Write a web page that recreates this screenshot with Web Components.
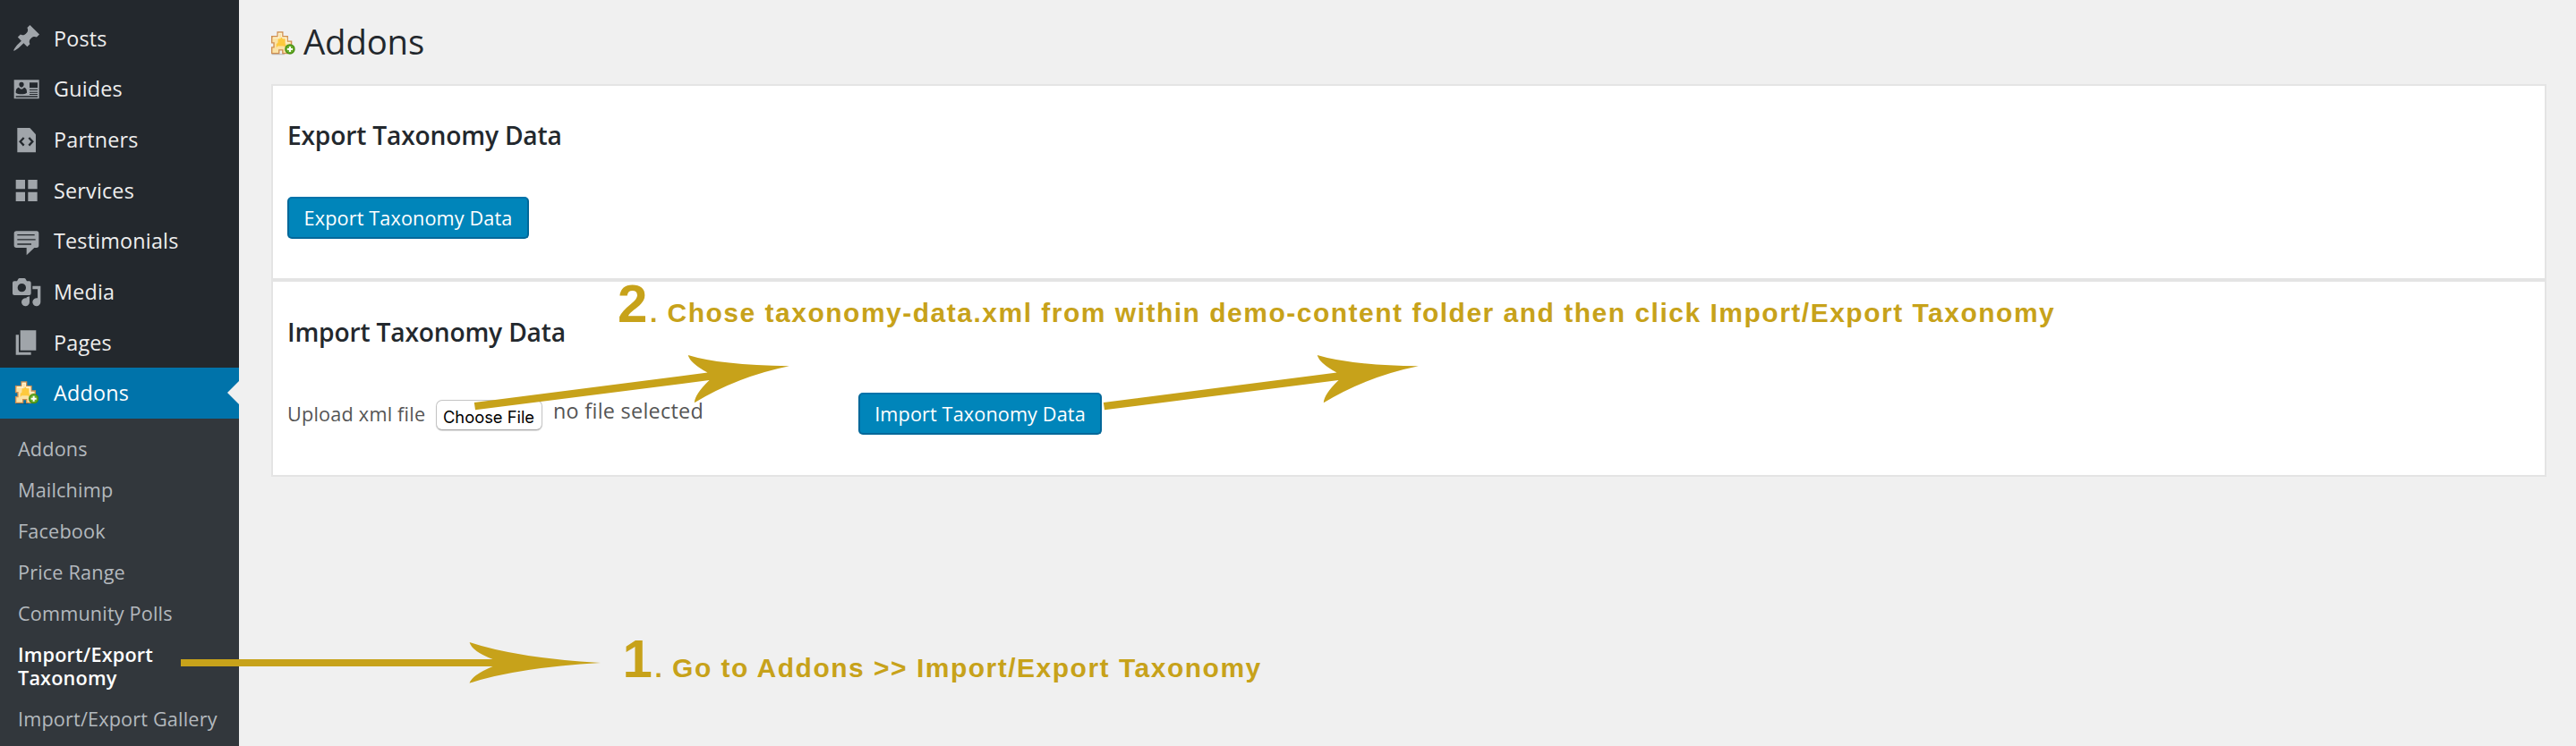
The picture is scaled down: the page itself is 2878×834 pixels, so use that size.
<!DOCTYPE html>
<html lang="en">
<head>
<meta charset="utf-8">
<title>Addons</title>
<style>
html,body{margin:0;height:100%;overflow:hidden;background:#f0f0f0}
body{font-family:"Open Sans",sans-serif;font-size:21.667px}
</style>
</head>
<body>
<addons-app></addons-app>
<script>
const puzzle = `<svg viewBox="0 0 80 80"><path d="M2 17H21V3H38V17H54V33H67V52H60V60H54V73H38V62H26V73H2V53H9V38H2Z" fill="#fbe2a6" stroke="#d08f50" stroke-width="4"/><path d="M6 21H25V7H34V21H50V38H62" fill="none" stroke="#fff3cf" stroke-width="4"/><path d="M23 25H30L34 19L38 25H46V40L50 52L40 49H22L17 54V42L22 38Z" fill="#fdc93e"/><path d="M2 76H44" stroke="#000" stroke-opacity=".18" stroke-width="4"/><circle cx="62" cy="59" r="17" fill="#478f12"/><circle cx="62" cy="59" r="13" fill="#69ac2b"/><path d="M62 50V68M53 59H71" stroke="#fff" stroke-width="6"/></svg>`;
const icons = {
 posts:`<svg viewBox="0 0 20 20"><path d="M10.44 3.02l1.82-1.82 6.36 6.35-1.83 1.82c-1.05-.68-2.48-.57-3.41.36l-.75.75c-.92.93-1.04 2.35-.35 3.41l-1.83 1.82-2.41-2.41-2.8 2.79c-.42.42-3.38 2.71-3.8 2.29s1.86-3.39 2.28-3.81l2.79-2.79L4.1 9.36l1.83-1.82c1.05.69 2.48.57 3.4-.36l.75-.75c.93-.92 1.05-2.35.36-3.41z"/></svg>`,
 guides:`<svg viewBox="0 0 100 100"><path fill-rule="evenodd" d="M8 19H92V82H8ZM60 28V46H87V28ZM60 51V54H87V51ZM60 59V62H87V59ZM60 66V69H87V66ZM14 73V77H87V73ZM33 26C27 26 25 30 25 34C25 39 28 44 33 44C38 44 41 39 41 34C41 30 39 26 33 26ZM24 44C17 46 14 50 14 62C18 66 25 67 33 67C41 67 47 66 51 62C51 50 48 46 42 44C39 48 36 50 33 50C30 50 27 48 24 44Z"/></svg>`,
 partners:`<svg viewBox="0 0 100 100"><path d="M19 12H61L81 34V94H19Z"/><path d="M41 45L29 58L41 71M58 45L70 58L58 71" fill="none" stroke="#23282d" stroke-width="7"/></svg>`,
 services:`<svg viewBox="0 0 100 100"><path d="M14 15H45V46H14ZM55 15H86V46H55ZM14 56H45V87H14ZM55 56H86V87H55Z"/></svg>`,
 testimonials:`<svg viewBox="0 0 100 100"><path d="M16 16H84Q91 16 91 24V64Q91 72 84 72H76L50 97V72H16Q8 72 8 64V24Q8 16 16 16Z"/><path d="M19 29H77M19 44.500H80M19 60H66" stroke="#23282d" stroke-width="4"/></svg>`,
 media:`<svg viewBox="0 0 100 100"><path fill-rule="evenodd" d="M9 16H18L22 9Q23 6 27 6H42Q46 6 47 9L51 16H59Q65 16 65 22V57Q65 63 59 63H9Q3 63 3 57V22Q3 16 9 16ZM34 24A14 14 0 1 0 34 52A14 14 0 1 0 34 24Z"/><path d="M70 32H97V86A13.500 13.500 0 1 1 87 73V43H70ZM60 67V86A13.500 13.500 0 1 1 50 73V70Z"/></svg>`,
 pages:`<svg viewBox="0 0 100 100"><path d="M29 10H82V77H29ZM14 25H24V83H65V92H14Z"/></svg>`,
 addons:puzzle
};
const define = (name, html) => customElements.define(name, class extends HTMLElement {
  constructor(){ super(); this.attachShadow({mode:'open'}).innerHTML = html(this); }
});

define('menu-item', el => `<style>
:host{display:flex;align-items:center;height:56.667px;color:#eee;font-size:23.333px;line-height:30px;letter-spacing:.2px;position:relative}
.icon{width:60px;display:flex;justify-content:center;fill:#a0a5aa}
.icon svg{display:block;width:33.333px;height:33.333px}
:host([current]){background:#0073aa;color:#fff}
:host([current]) .icon svg{width:26.667px;height:26.667px}
:host([current])::after{content:"";position:absolute;right:0;top:50%;margin-top:-13.333px;border:13.333px solid transparent;border-left:0;border-right-color:#f0f0f0}
</style><span class="icon">${icons[el.getAttribute('icon')]}</span><slot></slot>`);

define('sub-item', () => `<style>
:host{display:block;padding:10px 20px;font-size:21.667px;line-height:26px;letter-spacing:.16px;color:#b4b9be;white-space:nowrap}
:host([current]){color:#fff;font-weight:600}
</style><slot></slot>`);

define('side-menu', () => `<style>
:host{display:block;width:267px;flex:none;height:834px;box-sizing:border-box;padding-top:14.333px;background:#23282d;overflow:hidden}
.sub{background:#32373c;padding:11.667px 0 60px}
</style>
<menu-item icon="posts">Posts</menu-item><menu-item icon="guides">Guides</menu-item><menu-item icon="partners">Partners</menu-item><menu-item icon="services">Services</menu-item><menu-item icon="testimonials">Testimonials</menu-item><menu-item icon="media">Media</menu-item><menu-item icon="pages">Pages</menu-item><menu-item icon="addons" current>Addons</menu-item>
<div class="sub"><sub-item>Addons</sub-item><sub-item>Mailchimp</sub-item><sub-item>Facebook</sub-item><sub-item>Price Range</sub-item><sub-item>Community Polls</sub-item><sub-item current>Import/Export<br>Taxonomy</sub-item><sub-item>Import/Export Gallery</sub-item></div>`);

define('primary-button', () => `<style>
:host{display:block}
button{display:block;box-sizing:border-box;width:100%;height:47px;margin:0;padding:0;border:2px solid #006799;border-color:#0073aa #006799 #006799;border-radius:5px;background:#0085ba;color:#fff;font:21.667px/41px "Open Sans",sans-serif;letter-spacing:.12px;white-space:nowrap}
</style><button><slot></slot></button>`);

define('data-panel', () => `<style>
:host{display:block;box-sizing:border-box;background:#fff;border:2px solid #e4e4e4;padding:0 16px}
h3{margin:0;font-size:28.167px;line-height:40px;font-weight:600;letter-spacing:-.18px;color:#23282d}
</style><h3><slot name="title"></slot></h3><slot></slot>`);

define('file-picker', () => `<style>
:host{display:flex;color:#555;line-height:30px;white-space:nowrap}
.label{width:165.500px;padding-top:9px;letter-spacing:.2px}
button{box-sizing:border-box;width:119px;height:34px;margin:8px 0 0;padding:3px 0 0;border:1px solid #c4c4c4;border-bottom-color:#aaa;border-radius:7px;background:#fff;box-shadow:0 1px 1px #ddd;font:18.333px/22px Inter,sans-serif;color:#000}
.state{margin-left:12.500px;padding-top:5px;font-size:23.333px;letter-spacing:.3px}
</style><span class="label">Upload xml file</span><button>Choose File</button><span class="state">no file selected</span>`);

define('step-note', () => `<style>
:host{display:block;position:absolute;white-space:nowrap;color:#c7a21a;font:bold 30px/70px "Liberation Sans",Arial,sans-serif;letter-spacing:1.5px}
.n{font-size:60px;letter-spacing:2.500px}
</style><span class="n"><slot name="n"></slot></span><slot></slot>`);

define('note-arrows', () => `<style>
:host{display:block;position:absolute;inset:0;pointer-events:none}
svg{display:block}
</style><svg width="2878" height="834" fill="#c7a21a"><defs><path id="up" d="M529.800 450L790.500 416.600Q771 406 768.700 397Q804 408 881.800 409.300Q824 421 775.800 450.300Q776 441 792.500 425L531 458.300Z"/></defs><use href="#up"/><use href="#up" x="703"/><path d="M202 737H550.500Q527 728 524.600 718Q577 735.500 671 741Q577 746.500 524.600 763.700Q527 755 550.500 745H202Z"/></svg>`);

define('addons-page', () => `<style>
:host{display:block;flex:1;min-width:0;padding:0 33px 0 36px;box-sizing:border-box}
h1{display:flex;margin:0;height:94px;font-size:38.333px;line-height:48px;letter-spacing:-.15px;font-weight:400;color:#23282d;box-sizing:border-box;padding-top:22px}
h1 svg{width:27px;height:27px;margin:13px 9px 0 0}
.one{height:219px;padding-top:35px}
.one primary-button{width:270px;margin-top:49px}
.two{height:220px;padding-top:36px}
.row{display:flex;margin-top:48px}
file-picker{width:638px}
.two primary-button{width:272px}
</style>
<h1>${puzzle}Addons</h1>
<data-panel class="one"><span slot="title">Export Taxonomy Data</span><primary-button>Export Taxonomy Data</primary-button></data-panel>
<data-panel class="two"><span slot="title">Import Taxonomy Data</span><div class="row"><file-picker></file-picker><primary-button>Import Taxonomy Data</primary-button></div></data-panel>`);

define('addons-app', () => `<style>
:host{display:flex;position:relative;width:2878px;height:834px;overflow:hidden;background:#f0f0f0}
.s2{left:690px;top:305px}.s1{left:695.500px;top:702px}
</style><side-menu></side-menu><addons-page></addons-page>
<note-arrows></note-arrows>
<step-note class="s2"><span slot="n">2</span>. Chose taxonomy-data.xml from within demo-content folder and then click Import/Export Taxonomy</step-note>
<step-note class="s1"><span slot="n">1</span>. Go to Addons &gt;&gt; Import/Export Taxonomy</step-note>`);
</script>
</body>
</html>
